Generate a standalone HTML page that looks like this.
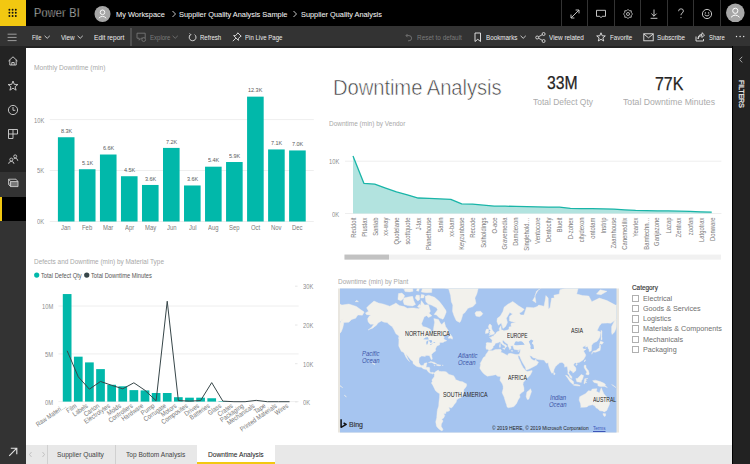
<!DOCTYPE html>
<html><head><meta charset="utf-8"><style>
html,body{margin:0;padding:0;}
body{width:750px;height:464px;overflow:hidden;position:relative;background:#fff;font-family:"Liberation Sans", sans-serif;}
.t{position:absolute;white-space:nowrap;}
svg{overflow:visible}
</style></head><body>
<div style="position:absolute;left:0;top:0;width:750px;height:26px;background:#000"></div>
<div style="position:absolute;left:0;top:0;width:26px;height:26px;background:#F2C811"></div>
<svg style="position:absolute;left:0;top:0" width="26" height="26"><circle cx="9.4" cy="9.7" r="0.95" fill="#111"/><circle cx="9.4" cy="12.8" r="0.95" fill="#111"/><circle cx="9.4" cy="16.0" r="0.95" fill="#111"/><circle cx="12.6" cy="9.7" r="0.95" fill="#111"/><circle cx="12.6" cy="12.8" r="0.95" fill="#111"/><circle cx="12.6" cy="16.0" r="0.95" fill="#111"/><circle cx="15.8" cy="9.7" r="0.95" fill="#111"/><circle cx="15.8" cy="12.8" r="0.95" fill="#111"/><circle cx="15.8" cy="16.0" r="0.95" fill="#111"/></svg>
<div class="t" style="left:34.00px;top:6.33px;font-size:13.227px;line-height:14.774px;color:#ffffff;transform:scaleX(0.820);transform-origin:0 0;-webkit-text-stroke:0.55px #000;letter-spacing:0.3px;">Power BI</div>
<svg style="position:absolute;left:94px;top:6px" width="17" height="17"><circle cx="8.5" cy="8" r="8" fill="#a6a6a6"/><circle cx="8.5" cy="6.3" r="2.3" fill="none" stroke="#fff" stroke-width="0.9"/><path d="M4.8 12.2 Q8.5 8.4 12.2 12.2" fill="none" stroke="#fff" stroke-width="0.9"/></svg>
<div class="t" style="left:115.80px;top:10.66px;font-size:7.558px;line-height:8.442px;color:#f2f2f2;transform:scaleX(0.983);transform-origin:0 0;-webkit-text-stroke:0.05px #f2f2f2;">My Workspace</div>
<svg style="position:absolute;left:170.5px;top:10.3px" width="6" height="8"><path d="M1.5 1 L4.5 4 L1.5 7" fill="none" stroke="#ddd" stroke-width="0.9"/></svg>
<div class="t" style="left:178.60px;top:10.66px;font-size:7.558px;line-height:8.442px;color:#f2f2f2;transform:scaleX(0.979);transform-origin:0 0;-webkit-text-stroke:0.05px #f2f2f2;">Supplier Quality Analysis Sample</div>
<svg style="position:absolute;left:291.5px;top:10.3px" width="6" height="8"><path d="M1.5 1 L4.5 4 L1.5 7" fill="none" stroke="#ddd" stroke-width="0.9"/></svg>
<div class="t" style="left:301.30px;top:10.66px;font-size:7.558px;line-height:8.442px;color:#f2f2f2;transform:scaleX(0.974);transform-origin:0 0;-webkit-text-stroke:0.05px #f2f2f2;">Supplier Quality Analysis</div>
<div style="position:absolute;left:561px;top:0;width:1px;height:26px;background:#333"></div>
<div style="position:absolute;left:587.4px;top:0;width:1px;height:26px;background:#333"></div>
<div style="position:absolute;left:614.2px;top:0;width:1px;height:26px;background:#333"></div>
<div style="position:absolute;left:640.4px;top:0;width:1px;height:26px;background:#333"></div>
<div style="position:absolute;left:666.8px;top:0;width:1px;height:26px;background:#333"></div>
<div style="position:absolute;left:693.1px;top:0;width:1px;height:26px;background:#333"></div>
<div style="position:absolute;left:719.5px;top:0;width:1px;height:26px;background:#333"></div>
<svg style="position:absolute;left:569px;top:8px" width="12" height="12"><path d="M2.2 9.8 L9.8 2.2 M6.6 2 H10 V5.4 M2 6.6 V10 H5.4" fill="none" stroke="#d8d8d8" stroke-width="0.9"/></svg>
<svg style="position:absolute;left:595px;top:8px" width="12" height="12"><path d="M1.5 2.3 H10.5 V8.3 H7.2 L6 9.7 L4.8 8.3 H1.5 Z" fill="none" stroke="#d8d8d8" stroke-width="0.9"/></svg>
<svg style="position:absolute;left:622px;top:8px" width="12" height="12"><circle cx="6" cy="6" r="1.5" fill="none" stroke="#d8d8d8" stroke-width="0.8"/><path d="M6.00 1.40 L7.34 2.77 L9.25 2.75 L9.23 4.66 L10.60 6.00 L9.23 7.34 L9.25 9.25 L7.34 9.23 L6.00 10.60 L4.66 9.23 L2.75 9.25 L2.77 7.34 L1.40 6.00 L2.77 4.66 L2.75 2.75 L4.66 2.77Z" fill="none" stroke="#d8d8d8" stroke-width="0.8" stroke-linejoin="round"/></svg>
<svg style="position:absolute;left:648px;top:8px" width="12" height="12"><path d="M6 1.5 V8.2 M3.4 5.6 L6 8.2 L8.6 5.6 M2.6 10.3 H9.4" fill="none" stroke="#d8d8d8" stroke-width="0.9"/></svg>
<svg style="position:absolute;left:676px;top:7px" width="10" height="13"><path d="M2.6 4.2 Q2.6 1.8 5 1.8 Q7.4 1.8 7.4 4 Q7.4 5.4 5.9 6.2 Q5 6.8 5 8.2" fill="none" stroke="#d8d8d8" stroke-width="0.85"/><circle cx="5" cy="10.6" r="0.55" fill="#d8d8d8"/></svg>
<svg style="position:absolute;left:701px;top:8px" width="12" height="12"><circle cx="6" cy="6" r="4.6" fill="none" stroke="#d8d8d8" stroke-width="0.9"/><circle cx="4.4" cy="4.9" r="0.7" fill="#d8d8d8"/><circle cx="7.6" cy="4.9" r="0.7" fill="#d8d8d8"/><path d="M3.6 6.8 Q6 9.4 8.4 6.8" fill="none" stroke="#d8d8d8" stroke-width="0.9"/></svg>
<svg style="position:absolute;left:725px;top:3px" width="20" height="20"><circle cx="10.3" cy="9.8" r="9.3" fill="#a6a6a6"/><circle cx="10.3" cy="7.8" r="2.6" fill="none" stroke="#fff" stroke-width="1"/><path d="M6 14.3 Q10.3 9.8 14.6 14.3" fill="none" stroke="#fff" stroke-width="1"/></svg>
<div style="position:absolute;left:0;top:26px;width:750px;height:20px;background:#333"></div>
<div style="position:absolute;left:26px;top:45.6px;width:706px;height:2.2px;background:#232323"></div>
<svg style="position:absolute;left:7px;top:33px" width="11" height="9"><path d="M0.6 1.2 H9.6 M0.6 4.4 H9.6 M0.6 7.6 H9.6" stroke="#c0c0c0" stroke-width="0.75"/></svg>
<div class="t" style="left:31.60px;top:33.92px;font-size:7.267px;line-height:8.118px;color:#ececec;transform:scaleX(0.803);transform-origin:0 0;">File</div>
<svg style="position:absolute;left:43.6px;top:35.3px" width="7" height="5"><path d="M0.6 0.8 L3.2 3.3 L5.8 0.8" fill="none" stroke="#ececec" stroke-width="0.8"/></svg>
<div class="t" style="left:60.80px;top:33.92px;font-size:7.267px;line-height:8.118px;color:#ececec;transform:scaleX(0.870);transform-origin:0 0;">View</div>
<svg style="position:absolute;left:77px;top:35.3px" width="7" height="5"><path d="M0.6 0.8 L3.2 3.3 L5.8 0.8" fill="none" stroke="#ececec" stroke-width="0.8"/></svg>
<div class="t" style="left:94.00px;top:33.92px;font-size:7.267px;line-height:8.118px;color:#ececec;transform:scaleX(0.906);transform-origin:0 0;">Edit report</div>
<div style="position:absolute;left:130.2px;top:27.5px;width:1.6px;height:18px;background:#505050"></div>
<svg style="position:absolute;left:135.5px;top:32px" width="11" height="11"><path d="M1 1.2 H9.2 V6.2 H5.2 L3.2 8.2 V6.2 H1 Z" fill="none" stroke="#7a7a7a" stroke-width="0.85"/><circle cx="7.7" cy="7.6" r="1.9" fill="#333" stroke="#7a7a7a" stroke-width="0.8"/></svg>
<div class="t" style="left:149.50px;top:33.92px;font-size:7.267px;line-height:8.118px;color:#7a7a7a;transform:scaleX(0.832);transform-origin:0 0;">Explore</div>
<svg style="position:absolute;left:172.2px;top:35.3px" width="7" height="5"><path d="M0.6 0.8 L3.2 3.3 L5.8 0.8" fill="none" stroke="#7a7a7a" stroke-width="0.8"/></svg>
<svg style="position:absolute;left:188px;top:32.5px" width="9" height="9"><path d="M6.6 1.6 A3.4 3.4 0 1 1 2.6 1.6" fill="none" stroke="#ececec" stroke-width="0.85"/><path d="M1.6 0.4 L2.8 1.6 L1.6 2.8" fill="none" stroke="#ececec" stroke-width="0.8"/></svg>
<div class="t" style="left:199.80px;top:33.92px;font-size:7.267px;line-height:8.118px;color:#ececec;transform:scaleX(0.833);transform-origin:0 0;">Refresh</div>
<svg style="position:absolute;left:231.5px;top:32px" width="10" height="10"><path d="M5.8 0.8 L9.2 4.2 L8 4.8 L6.4 6.6 L6.4 8.4 L1.6 3.6 L3.4 3.6 L5.2 2 Z M3.9 6.1 L0.8 9.2" fill="none" stroke="#ececec" stroke-width="0.85"/></svg>
<div class="t" style="left:245.20px;top:33.92px;font-size:7.267px;line-height:8.118px;color:#ececec;transform:scaleX(0.836);transform-origin:0 0;">Pin Live Page</div>
<svg style="position:absolute;left:405px;top:32.5px" width="8" height="9"><path d="M2.5 1 L1 2.6 L2.5 4.2 M1.2 2.6 H4 A2.6 2.6 0 0 1 4 7.8 H3" fill="none" stroke="#7a7a7a" stroke-width="0.85"/></svg>
<div class="t" style="left:416.80px;top:33.92px;font-size:7.267px;line-height:8.118px;color:#7a7a7a;transform:scaleX(0.884);transform-origin:0 0;">Reset to default</div>
<svg style="position:absolute;left:474px;top:32px" width="8" height="11"><path d="M1 1 H6.5 V9.5 L3.75 7.3 L1 9.5 Z" fill="none" stroke="#ececec" stroke-width="0.9"/></svg>
<div class="t" style="left:485.90px;top:33.92px;font-size:7.267px;line-height:8.118px;color:#ececec;transform:scaleX(0.867);transform-origin:0 0;">Bookmarks</div>
<svg style="position:absolute;left:519.8px;top:35.3px" width="7" height="5"><path d="M0.6 0.8 L3.2 3.3 L5.8 0.8" fill="none" stroke="#ececec" stroke-width="0.8"/></svg>
<svg style="position:absolute;left:535px;top:32px" width="11" height="11"><circle cx="2.2" cy="5.5" r="1.5" fill="none" stroke="#ececec" stroke-width="0.8"/><circle cx="8.6" cy="2" r="1.5" fill="none" stroke="#ececec" stroke-width="0.8"/><circle cx="8.6" cy="9" r="1.5" fill="none" stroke="#ececec" stroke-width="0.8"/><path d="M3.5 4.8 L7.3 2.7 M3.5 6.2 L7.3 8.3" stroke="#ececec" stroke-width="0.8"/></svg>
<div class="t" style="left:549.30px;top:33.92px;font-size:7.267px;line-height:8.118px;color:#ececec;transform:scaleX(0.878);transform-origin:0 0;">View related</div>
<svg style="position:absolute;left:596px;top:32px" width="10" height="10"><path d="M5 0.8 L6.2 3.8 L9.3 3.9 L6.9 5.9 L7.7 9 L5 7.3 L2.3 9 L3.1 5.9 L0.7 3.9 L3.8 3.8 Z" fill="none" stroke="#ececec" stroke-width="0.85"/></svg>
<div class="t" style="left:610.00px;top:33.92px;font-size:7.267px;line-height:8.118px;color:#ececec;transform:scaleX(0.846);transform-origin:0 0;">Favorite</div>
<svg style="position:absolute;left:642.5px;top:33px" width="11" height="9"><rect x="0.8" y="0.8" width="9.4" height="7" fill="none" stroke="#ececec" stroke-width="0.85"/><path d="M0.8 1 L5.5 4.8 L10.2 1" fill="none" stroke="#ececec" stroke-width="0.85"/></svg>
<div class="t" style="left:656.70px;top:33.92px;font-size:7.267px;line-height:8.118px;color:#ececec;transform:scaleX(0.867);transform-origin:0 0;">Subscribe</div>
<svg style="position:absolute;left:695px;top:32px" width="10" height="10"><path d="M1 4.5 V9 H8.5 V7" fill="none" stroke="#ececec" stroke-width="0.85"/><path d="M3 7 Q3.5 3.5 7 3.5 V5.5 L9.5 3 L7 0.7 V2.5 Q3 2.5 3 7" fill="none" stroke="#ececec" stroke-width="0.85"/></svg>
<div class="t" style="left:708.50px;top:33.92px;font-size:7.267px;line-height:8.118px;color:#ececec;transform:scaleX(0.814);transform-origin:0 0;">Share</div>
<svg style="position:absolute;left:735px;top:35.3px" width="12" height="3"><circle cx="1.5" cy="1.5" r="0.7" fill="#ececec"/><circle cx="5.1" cy="1.5" r="0.7" fill="#ececec"/><circle cx="8.7" cy="1.5" r="0.7" fill="#ececec"/></svg>
<div style="position:absolute;left:0;top:46px;width:26px;height:418px;background:#333"></div>
<div style="position:absolute;left:0;top:46px;width:26px;height:126px;background:#232323"></div>
<div style="position:absolute;left:0;top:197px;width:26px;height:24px;background:#000"></div>
<div style="position:absolute;left:0;top:197px;width:1.5px;height:24px;background:#F2C811"></div>
<svg style="position:absolute;left:7px;top:55px" width="12" height="12"><path d="M1.5 6 L6 1.8 L10.5 6 M2.8 4.9 V10 H9.2 V4.9 M4.8 10 V7.5 H7.2 V10" fill="none" stroke="#d4d4d4" stroke-width="0.9"/></svg>
<svg style="position:absolute;left:7px;top:80px" width="12" height="12"><path d="M6 1 L7.3 4.4 L10.9 4.5 L8.1 6.7 L9.1 10.2 L6 8.2 L2.9 10.2 L3.9 6.7 L1.1 4.5 L4.7 4.4 Z" fill="none" stroke="#d4d4d4" stroke-width="0.9"/></svg>
<svg style="position:absolute;left:7px;top:104px" width="12" height="12"><circle cx="6" cy="6" r="4.6" fill="none" stroke="#d4d4d4" stroke-width="0.9"/><path d="M6 3 V6.3 H8.3" fill="none" stroke="#d4d4d4" stroke-width="0.9"/></svg>
<svg style="position:absolute;left:7px;top:128px" width="12" height="12"><path d="M1.5 1.5 H10.5 V6 H6 V10.5 H1.5 Z M6 1.5 V6 M1.5 6 H6" fill="none" stroke="#d4d4d4" stroke-width="0.9"/></svg>
<svg style="position:absolute;left:7px;top:153px" width="12" height="12"><circle cx="4.3" cy="6.6" r="1.5" fill="none" stroke="#d4d4d4" stroke-width="0.85"/><path d="M1.6 10.8 Q1.8 8.4 4.3 8.4 Q6.8 8.4 7 10.8" fill="none" stroke="#d4d4d4" stroke-width="0.85"/><circle cx="8.2" cy="3.4" r="1.5" fill="none" stroke="#d4d4d4" stroke-width="0.85"/><path d="M6.6 6.2 Q7 5.2 8.2 5.2 Q10.6 5.2 10.8 7.8" fill="none" stroke="#d4d4d4" stroke-width="0.85"/></svg>
<svg style="position:absolute;left:7px;top:177px" width="13" height="12"><path d="M3.6 4.6 H11 V9.6 H3.6 L1.6 7.6 Z" fill="#777"/><path d="M1.6 2.2 H9 L11 4.6 V9.6 H3.6 L1.6 7.6 Z M1.6 2.2 L3.6 4.6 H11 M3.6 4.6 V9.6" fill="none" stroke="#d4d4d4" stroke-width="0.85" stroke-linejoin="round"/></svg>
<svg style="position:absolute;left:8px;top:447px" width="12" height="12"><path d="M1.2 8.8 L8.8 1.2 M2.8 1.2 H8.8 V7.2" fill="none" stroke="#e0e0e0" stroke-width="1.15"/></svg>
<div style="position:absolute;left:732px;top:46px;width:18px;height:418px;background:#222"></div>
<div style="position:absolute;left:732px;top:46px;width:1.2px;height:418px;background:#000"></div>
<svg style="position:absolute;left:737px;top:55px" width="8" height="9"><path d="M5.2 1.8 L2.6 4.6 L5.2 7.4" fill="none" stroke="#ccc" stroke-width="0.8"/></svg>
<div class="t" style="left:737px;top:80.2px;font-size:7.2px;line-height:8px;color:#e8e8e8;-webkit-text-stroke:0.25px #e8e8e8;writing-mode:vertical-rl;letter-spacing:-0.2px">FILTERS</div>
<div style="position:absolute;left:26px;top:445px;width:706px;height:19px;background:#e8e8e8"></div>
<svg style="position:absolute;left:28px;top:451px" width="18" height="8"><path d="M3.5 1 L1.5 3.5 L3.5 6 M14.5 1 L16.5 3.5 L14.5 6" fill="none" stroke="#b8b8b8" stroke-width="0.8"/></svg>
<div style="position:absolute;left:47px;top:445px;width:1px;height:19px;background:#d0d0d0"></div>
<div style="position:absolute;left:114.5px;top:445px;width:1px;height:19px;background:#d0d0d0"></div>
<div class="t" style="left:56.80px;top:451.19px;font-size:6.977px;line-height:7.793px;color:#444;transform:scaleX(0.954);transform-origin:0 0;">Supplier Quality</div>
<div class="t" style="left:126.30px;top:451.19px;font-size:6.977px;line-height:7.793px;color:#444;transform:scaleX(0.944);transform-origin:0 0;">Top Bottom Analysis</div>
<div style="position:absolute;left:197px;top:445px;width:77.5px;height:19px;background:#fff"></div>
<div style="position:absolute;left:197px;top:462px;width:77.5px;height:2px;background:#F2C811"></div>
<div class="t" style="left:208.40px;top:451.19px;font-size:6.977px;line-height:7.793px;color:#252525;transform:scaleX(0.952);transform-origin:0 0;-webkit-text-stroke:0.05px #252525;">Downtime Analysis</div>
<div class="t" style="left:34.10px;top:63.83px;font-size:7.703px;line-height:8.605px;color:#a8a8a8;transform:scaleX(0.862);transform-origin:0 0;">Monthly Downtime (min)</div>
<svg style="position:absolute;left:0;top:0" width="750" height="464"><line x1="49.8" y1="119.6" x2="313.8" y2="119.6" stroke="#eaeaea" stroke-width="0.8"/><line x1="49.8" y1="170.5" x2="313.8" y2="170.5" stroke="#eaeaea" stroke-width="0.8"/><line x1="49.8" y1="221.5" x2="313.8" y2="221.5" stroke="#eaeaea" stroke-width="0.8"/><rect x="57.90" y="137.25" width="16.6" height="84.25" fill="#01B8AA"/><rect x="78.92" y="169.23" width="16.6" height="52.27" fill="#01B8AA"/><rect x="99.94" y="154.51" width="16.6" height="66.99" fill="#01B8AA"/><rect x="120.96" y="176.23" width="16.6" height="45.27" fill="#01B8AA"/><rect x="141.98" y="184.96" width="16.6" height="36.54" fill="#01B8AA"/><rect x="163.00" y="147.91" width="16.6" height="73.59" fill="#01B8AA"/><rect x="184.02" y="185.47" width="16.6" height="36.03" fill="#01B8AA"/><rect x="205.04" y="166.69" width="16.6" height="54.81" fill="#01B8AA"/><rect x="226.06" y="162.02" width="16.6" height="59.48" fill="#01B8AA"/><rect x="247.08" y="96.65" width="16.6" height="124.85" fill="#01B8AA"/><rect x="268.10" y="149.44" width="16.6" height="72.06" fill="#01B8AA"/><rect x="289.12" y="150.45" width="16.6" height="71.05" fill="#01B8AA"/></svg>
<div class="t" style="left:34.15px;top:116.58px;font-size:6.541px;line-height:7.306px;color:#8c8c8c;transform:scaleX(0.880);transform-origin:0 0;">10K</div>
<div class="t" style="left:37.35px;top:167.48px;font-size:6.541px;line-height:7.306px;color:#8c8c8c;transform:scaleX(0.880);transform-origin:0 0;">5K</div>
<div class="t" style="left:37.35px;top:218.48px;font-size:6.541px;line-height:7.306px;color:#8c8c8c;transform:scaleX(0.880);transform-origin:0 0;">0K</div>
<div class="t" style="left:60.55px;top:128.03px;font-size:6.105px;line-height:6.819px;color:#5a5a5a;transform:scaleX(0.900);transform-origin:0 0;">8.3K</div>
<div class="t" style="left:61.43px;top:223.89px;font-size:6.977px;line-height:7.793px;color:#7a7a7a;transform:scaleX(0.850);transform-origin:0 0;">Jan</div>
<div class="t" style="left:81.57px;top:160.00px;font-size:6.105px;line-height:6.819px;color:#5a5a5a;transform:scaleX(0.900);transform-origin:0 0;">5.1K</div>
<div class="t" style="left:82.11px;top:223.89px;font-size:6.977px;line-height:7.793px;color:#7a7a7a;transform:scaleX(0.850);transform-origin:0 0;">Feb</div>
<div class="t" style="left:102.59px;top:145.29px;font-size:6.105px;line-height:6.819px;color:#5a5a5a;transform:scaleX(0.900);transform-origin:0 0;">6.6K</div>
<div class="t" style="left:103.14px;top:223.89px;font-size:6.977px;line-height:7.793px;color:#7a7a7a;transform:scaleX(0.850);transform-origin:0 0;">Mar</div>
<div class="t" style="left:123.61px;top:167.01px;font-size:6.105px;line-height:6.819px;color:#5a5a5a;transform:scaleX(0.900);transform-origin:0 0;">4.5K</div>
<div class="t" style="left:124.65px;top:223.89px;font-size:6.977px;line-height:7.793px;color:#7a7a7a;transform:scaleX(0.850);transform-origin:0 0;">Apr</div>
<div class="t" style="left:144.63px;top:175.74px;font-size:6.105px;line-height:6.819px;color:#5a5a5a;transform:scaleX(0.900);transform-origin:0 0;">3.6K</div>
<div class="t" style="left:144.68px;top:223.89px;font-size:6.977px;line-height:7.793px;color:#7a7a7a;transform:scaleX(0.850);transform-origin:0 0;">May</div>
<div class="t" style="left:165.65px;top:138.69px;font-size:6.105px;line-height:6.819px;color:#5a5a5a;transform:scaleX(0.900);transform-origin:0 0;">7.2K</div>
<div class="t" style="left:166.53px;top:223.89px;font-size:6.977px;line-height:7.793px;color:#7a7a7a;transform:scaleX(0.850);transform-origin:0 0;">Jun</div>
<div class="t" style="left:186.67px;top:176.24px;font-size:6.105px;line-height:6.819px;color:#5a5a5a;transform:scaleX(0.900);transform-origin:0 0;">3.6K</div>
<div class="t" style="left:188.52px;top:223.89px;font-size:6.977px;line-height:7.793px;color:#7a7a7a;transform:scaleX(0.850);transform-origin:0 0;">Jul</div>
<div class="t" style="left:207.69px;top:157.47px;font-size:6.105px;line-height:6.819px;color:#5a5a5a;transform:scaleX(0.900);transform-origin:0 0;">5.4K</div>
<div class="t" style="left:208.06px;top:223.89px;font-size:6.977px;line-height:7.793px;color:#7a7a7a;transform:scaleX(0.850);transform-origin:0 0;">Aug</div>
<div class="t" style="left:228.71px;top:152.80px;font-size:6.105px;line-height:6.819px;color:#5a5a5a;transform:scaleX(0.900);transform-origin:0 0;">5.9K</div>
<div class="t" style="left:229.08px;top:223.89px;font-size:6.977px;line-height:7.793px;color:#7a7a7a;transform:scaleX(0.850);transform-origin:0 0;">Sep</div>
<div class="t" style="left:248.20px;top:87.43px;font-size:6.105px;line-height:6.819px;color:#5a5a5a;transform:scaleX(0.900);transform-origin:0 0;">12.3K</div>
<div class="t" style="left:250.77px;top:223.89px;font-size:6.977px;line-height:7.793px;color:#7a7a7a;transform:scaleX(0.850);transform-origin:0 0;">Oct</div>
<div class="t" style="left:270.75px;top:140.21px;font-size:6.105px;line-height:6.819px;color:#5a5a5a;transform:scaleX(0.900);transform-origin:0 0;">7.1K</div>
<div class="t" style="left:271.12px;top:223.89px;font-size:6.977px;line-height:7.793px;color:#7a7a7a;transform:scaleX(0.850);transform-origin:0 0;">Nov</div>
<div class="t" style="left:291.77px;top:141.23px;font-size:6.105px;line-height:6.819px;color:#5a5a5a;transform:scaleX(0.900);transform-origin:0 0;">7.0K</div>
<div class="t" style="left:292.14px;top:223.89px;font-size:6.977px;line-height:7.793px;color:#7a7a7a;transform:scaleX(0.850);transform-origin:0 0;">Dec</div>
<div class="t" style="left:332.90px;top:75.67px;font-size:22.027px;line-height:24.604px;color:#3c3c3c;transform:scaleX(0.920);transform-origin:0 0;-webkit-text-stroke:0.6px #fff;letter-spacing:-0.1px;">Downtime Analysis</div>
<div class="t" style="left:547.30px;top:72.66px;font-size:18.605px;line-height:20.781px;color:#252423;transform:scaleX(0.846);transform-origin:0 0;-webkit-text-stroke:0.25px #252423;">33M</div>
<div class="t" style="left:532.50px;top:97.80px;font-size:8.285px;line-height:9.254px;color:#ababab;transform:scaleX(1.020);transform-origin:0 0;">Total Defect Qty</div>
<div class="t" style="left:654.90px;top:74.09px;font-size:18.023px;line-height:20.132px;color:#252423;transform:scaleX(0.885);transform-origin:0 0;-webkit-text-stroke:0.25px #252423;">77K</div>
<div class="t" style="left:622.90px;top:97.91px;font-size:8.721px;line-height:9.741px;color:#ababab;transform:scaleX(0.994);transform-origin:0 0;">Total Downtime Minutes</div>
<div class="t" style="left:329.00px;top:120.19px;font-size:6.977px;line-height:7.793px;color:#a8a8a8;transform:scaleX(0.930);transform-origin:0 0;">Downtime (min) by Vendor</div>
<svg style="position:absolute;left:0;top:0" width="750" height="464"><line x1="345" y1="161.2" x2="721.4" y2="161.2" stroke="#eaeaea" stroke-width="0.8"/><line x1="345" y1="213.5" x2="721.4" y2="213.5" stroke="#eaeaea" stroke-width="0.8"/><polygon points="353.00,213.5 353.00,155.97 363.87,183.32 374.74,184.11 385.61,188.08 396.48,191.90 407.35,194.78 418.22,198.02 429.09,198.33 439.96,198.86 450.83,199.38 461.70,203.88 472.57,204.09 483.44,205.13 494.31,206.18 505.18,206.18 516.05,206.44 526.92,206.70 537.79,206.96 548.66,207.12 559.53,207.22 570.40,208.43 581.27,208.64 592.14,208.69 603.01,208.79 613.88,209.05 624.75,209.84 635.62,210.47 646.49,210.62 657.36,210.78 668.23,210.88 679.10,211.15 689.97,211.41 700.84,211.83 711.71,212.19 711.71,213.5" fill="#b2e3df"/><polyline points="353.00,155.97 363.87,183.32 374.74,184.11 385.61,188.08 396.48,191.90 407.35,194.78 418.22,198.02 429.09,198.33 439.96,198.86 450.83,199.38 461.70,203.88 472.57,204.09 483.44,205.13 494.31,206.18 505.18,206.18 516.05,206.44 526.92,206.70 537.79,206.96 548.66,207.12 559.53,207.22 570.40,208.43 581.27,208.64 592.14,208.69 603.01,208.79 613.88,209.05 624.75,209.84 635.62,210.47 646.49,210.62 657.36,210.78 668.23,210.88 679.10,211.15 689.97,211.41 700.84,211.83 711.71,212.19" fill="none" stroke="#19b5a8" stroke-width="1.3" stroke-linejoin="round"/><rect x="344.5" y="254.6" width="376.5" height="5" fill="#f1f1f1"/><rect x="344.5" y="254.6" width="44.5" height="5" fill="#c2c2c2"/></svg>
<div class="t" style="left:328.95px;top:157.78px;font-size:6.541px;line-height:7.306px;color:#8c8c8c;transform:scaleX(0.880);transform-origin:0 0;">10K</div>
<div class="t" style="left:332.15px;top:211.08px;font-size:6.541px;line-height:7.306px;color:#8c8c8c;transform:scaleX(0.880);transform-origin:0 0;">0K</div>
<div class="t" style="right:397.00px;top:213.70px;font-size:6.8px;line-height:7.2px;color:#7a7a7a;transform:rotate(-90deg) scaleX(0.86);transform-origin:100% 50%">Reddoit</div>
<div class="t" style="right:386.13px;top:213.70px;font-size:6.8px;line-height:7.2px;color:#7a7a7a;transform:rotate(-90deg) scaleX(0.86);transform-origin:100% 50%">Plustax</div>
<div class="t" style="right:375.26px;top:213.70px;font-size:6.8px;line-height:7.2px;color:#7a7a7a;transform:rotate(-90deg) scaleX(0.86);transform-origin:100% 50%">Sanlab</div>
<div class="t" style="right:364.39px;top:213.70px;font-size:6.8px;line-height:7.2px;color:#7a7a7a;transform:rotate(-90deg) scaleX(0.86);transform-origin:100% 50%">xx-way</div>
<div class="t" style="right:353.52px;top:213.70px;font-size:6.8px;line-height:7.2px;color:#7a7a7a;transform:rotate(-90deg) scaleX(0.86);transform-origin:100% 50%">Quotelane</div>
<div class="t" style="right:342.65px;top:213.70px;font-size:6.8px;line-height:7.2px;color:#7a7a7a;transform:rotate(-90deg) scaleX(0.86);transform-origin:100% 50%">scottquote</div>
<div class="t" style="right:331.78px;top:213.70px;font-size:6.8px;line-height:7.2px;color:#7a7a7a;transform:rotate(-90deg) scaleX(0.86);transform-origin:100% 50%">J-tax</div>
<div class="t" style="right:320.91px;top:213.70px;font-size:6.8px;line-height:7.2px;color:#7a7a7a;transform:rotate(-90deg) scaleX(0.86);transform-origin:100% 50%">Planethouse</div>
<div class="t" style="right:310.04px;top:213.70px;font-size:6.8px;line-height:7.2px;color:#7a7a7a;transform:rotate(-90deg) scaleX(0.86);transform-origin:100% 50%">Sanin</div>
<div class="t" style="right:299.17px;top:213.70px;font-size:6.8px;line-height:7.2px;color:#7a7a7a;transform:rotate(-90deg) scaleX(0.86);transform-origin:100% 50%">xx-bam</div>
<div class="t" style="right:288.30px;top:213.70px;font-size:6.8px;line-height:7.2px;color:#7a7a7a;transform:rotate(-90deg) scaleX(0.86);transform-origin:100% 50%">Keyzunbase</div>
<div class="t" style="right:277.43px;top:213.70px;font-size:6.8px;line-height:7.2px;color:#7a7a7a;transform:rotate(-90deg) scaleX(0.86);transform-origin:100% 50%">Recode</div>
<div class="t" style="right:266.56px;top:213.70px;font-size:6.8px;line-height:7.2px;color:#7a7a7a;transform:rotate(-90deg) scaleX(0.86);transform-origin:100% 50%">Solholdings</div>
<div class="t" style="right:255.69px;top:213.70px;font-size:6.8px;line-height:7.2px;color:#7a7a7a;transform:rotate(-90deg) scaleX(0.86);transform-origin:100% 50%">O-ace</div>
<div class="t" style="right:244.82px;top:213.70px;font-size:6.8px;line-height:7.2px;color:#7a7a7a;transform:rotate(-90deg) scaleX(0.86);transform-origin:100% 50%">Gravemedia</div>
<div class="t" style="right:233.95px;top:213.70px;font-size:6.8px;line-height:7.2px;color:#7a7a7a;transform:rotate(-90deg) scaleX(0.86);transform-origin:100% 50%">Damdexon</div>
<div class="t" style="right:223.08px;top:213.70px;font-size:6.8px;line-height:7.2px;color:#7a7a7a;transform:rotate(-90deg) scaleX(0.86);transform-origin:100% 50%">Singlehold…</div>
<div class="t" style="right:212.21px;top:213.70px;font-size:6.8px;line-height:7.2px;color:#7a7a7a;transform:rotate(-90deg) scaleX(0.86);transform-origin:100% 50%">Ventocore</div>
<div class="t" style="right:201.34px;top:213.70px;font-size:6.8px;line-height:7.2px;color:#7a7a7a;transform:rotate(-90deg) scaleX(0.86);transform-origin:100% 50%">Dentocity</div>
<div class="t" style="right:190.47px;top:213.70px;font-size:6.8px;line-height:7.2px;color:#7a7a7a;transform:rotate(-90deg) scaleX(0.86);transform-origin:100% 50%">Blueit</div>
<div class="t" style="right:179.60px;top:213.70px;font-size:6.8px;line-height:7.2px;color:#7a7a7a;transform:rotate(-90deg) scaleX(0.86);transform-origin:100% 50%">D-zohex</div>
<div class="t" style="right:168.73px;top:213.70px;font-size:6.8px;line-height:7.2px;color:#7a7a7a;transform:rotate(-90deg) scaleX(0.86);transform-origin:100% 50%">citydexon</div>
<div class="t" style="right:157.86px;top:213.70px;font-size:6.8px;line-height:7.2px;color:#7a7a7a;transform:rotate(-90deg) scaleX(0.86);transform-origin:100% 50%">ontotam</div>
<div class="t" style="right:146.99px;top:213.70px;font-size:6.8px;line-height:7.2px;color:#7a7a7a;transform:rotate(-90deg) scaleX(0.86);transform-origin:100% 50%">Instrip</div>
<div class="t" style="right:136.12px;top:213.70px;font-size:6.8px;line-height:7.2px;color:#7a7a7a;transform:rotate(-90deg) scaleX(0.86);transform-origin:100% 50%">Zaamhouse</div>
<div class="t" style="right:125.25px;top:213.70px;font-size:6.8px;line-height:7.2px;color:#7a7a7a;transform:rotate(-90deg) scaleX(0.86);transform-origin:100% 50%">Canemedilix</div>
<div class="t" style="right:114.38px;top:213.70px;font-size:6.8px;line-height:7.2px;color:#7a7a7a;transform:rotate(-90deg) scaleX(0.86);transform-origin:100% 50%">Yearlex</div>
<div class="t" style="right:103.51px;top:213.70px;font-size:6.8px;line-height:7.2px;color:#7a7a7a;transform:rotate(-90deg) scaleX(0.86);transform-origin:100% 50%">Bamtechn…</div>
<div class="t" style="right:92.64px;top:213.70px;font-size:6.8px;line-height:7.2px;color:#7a7a7a;transform:rotate(-90deg) scaleX(0.86);transform-origin:100% 50%">Ganjazone</div>
<div class="t" style="right:81.77px;top:213.70px;font-size:6.8px;line-height:7.2px;color:#7a7a7a;transform:rotate(-90deg) scaleX(0.86);transform-origin:100% 50%">Lazap</div>
<div class="t" style="right:70.90px;top:213.70px;font-size:6.8px;line-height:7.2px;color:#7a7a7a;transform:rotate(-90deg) scaleX(0.86);transform-origin:100% 50%">Zentrax</div>
<div class="t" style="right:60.03px;top:213.70px;font-size:6.8px;line-height:7.2px;color:#7a7a7a;transform:rotate(-90deg) scaleX(0.86);transform-origin:100% 50%">zoofan</div>
<div class="t" style="right:49.16px;top:213.70px;font-size:6.8px;line-height:7.2px;color:#7a7a7a;transform:rotate(-90deg) scaleX(0.86);transform-origin:100% 50%">Latgotrax</div>
<div class="t" style="right:38.29px;top:213.70px;font-size:6.8px;line-height:7.2px;color:#7a7a7a;transform:rotate(-90deg) scaleX(0.86);transform-origin:100% 50%">Donware</div>
<div class="t" style="left:34.10px;top:257.82px;font-size:7.267px;line-height:8.118px;color:#a8a8a8;transform:scaleX(0.887);transform-origin:0 0;">Defects and Downtime (min) by Material Type</div>
<svg style="position:absolute;left:0;top:0" width="750" height="464"><circle cx="36.7" cy="275.1" r="2.6" fill="#01B8AA"/><circle cx="86.75" cy="275.1" r="2.65" fill="#374649"/><line x1="58.4" y1="306" x2="298.6" y2="306" stroke="#eaeaea" stroke-width="0.8"/><line x1="58.4" y1="353.9" x2="298.6" y2="353.9" stroke="#eaeaea" stroke-width="0.8"/><line x1="58.4" y1="401.6" x2="298.6" y2="401.6" stroke="#eaeaea" stroke-width="0.8"/><line x1="295" y1="286.2" x2="297.5" y2="286.2" stroke="#e0e0e0" stroke-width="0.8"/><line x1="295" y1="325" x2="297.5" y2="325" stroke="#e0e0e0" stroke-width="0.8"/><line x1="295" y1="363.7" x2="297.5" y2="363.7" stroke="#e0e0e0" stroke-width="0.8"/><line x1="295" y1="401.9" x2="297.5" y2="401.9" stroke="#e0e0e0" stroke-width="0.8"/><rect x="62.80" y="294.05" width="8.7" height="107.55" fill="#01B8AA"/><rect x="73.92" y="356.67" width="8.7" height="44.93" fill="#01B8AA"/><rect x="85.04" y="362.40" width="8.7" height="39.20" fill="#01B8AA"/><rect x="96.16" y="369.10" width="8.7" height="32.50" fill="#01B8AA"/><rect x="107.28" y="384.77" width="8.7" height="16.83" fill="#01B8AA"/><rect x="118.40" y="386.30" width="8.7" height="15.30" fill="#01B8AA"/><rect x="129.52" y="390.13" width="8.7" height="11.47" fill="#01B8AA"/><rect x="140.64" y="390.41" width="8.7" height="11.19" fill="#01B8AA"/><rect x="151.76" y="393.00" width="8.7" height="8.60" fill="#01B8AA"/><rect x="162.88" y="393.00" width="8.7" height="8.60" fill="#01B8AA"/><rect x="174.00" y="397.20" width="8.7" height="4.40" fill="#01B8AA"/><rect x="185.12" y="397.68" width="8.7" height="3.92" fill="#01B8AA"/><rect x="196.24" y="397.68" width="8.7" height="3.92" fill="#01B8AA"/><rect x="207.36" y="398.25" width="8.7" height="3.35" fill="#01B8AA"/><rect x="218.48" y="401.12" width="8.7" height="0.48" fill="#01B8AA"/><polyline points="67.15,350.79 78.27,376.83 89.39,389.17 100.51,381.46 111.63,385.31 122.75,388.79 133.87,382.81 144.99,390.33 156.11,400.74 167.23,301.23 178.35,400.55 189.47,401.13 200.59,400.55 211.71,382.61 222.83,401.13 233.95,401.71 245.07,401.71 256.19,400.36 267.31,401.71 278.43,401.71 289.55,401.71" fill="none" stroke="#374649" stroke-width="1.0"/></svg>
<div class="t" style="left:40.60px;top:271.82px;font-size:7.267px;line-height:8.118px;color:#555;transform:scaleX(0.787);transform-origin:0 0;">Total Defect Qty</div>
<div class="t" style="left:90.70px;top:271.82px;font-size:7.267px;line-height:8.118px;color:#555;transform:scaleX(0.791);transform-origin:0 0;">Total Downtime Minutes</div>
<div class="t" style="left:41.80px;top:302.98px;font-size:6.541px;line-height:7.306px;color:#8c8c8c;transform:scaleX(0.880);transform-origin:0 0;">10M</div>
<div class="t" style="left:45.00px;top:350.88px;font-size:6.541px;line-height:7.306px;color:#8c8c8c;transform:scaleX(0.880);transform-origin:0 0;">5M</div>
<div class="t" style="left:45.00px;top:398.58px;font-size:6.541px;line-height:7.306px;color:#8c8c8c;transform:scaleX(0.880);transform-origin:0 0;">0M</div>
<div class="t" style="left:303.20px;top:283.18px;font-size:6.541px;line-height:7.306px;color:#8c8c8c;transform:scaleX(0.880);transform-origin:0 0;">30K</div>
<div class="t" style="left:303.20px;top:321.98px;font-size:6.541px;line-height:7.306px;color:#8c8c8c;transform:scaleX(0.880);transform-origin:0 0;">20K</div>
<div class="t" style="left:303.20px;top:360.68px;font-size:6.541px;line-height:7.306px;color:#8c8c8c;transform:scaleX(0.880);transform-origin:0 0;">10K</div>
<div class="t" style="left:303.20px;top:398.88px;font-size:6.541px;line-height:7.306px;color:#8c8c8c;transform:scaleX(0.880);transform-origin:0 0;">0K</div>
<div class="t" style="right:687.25px;top:402px;font-size:6.8px;line-height:7.2px;color:#7a7a7a;transform:rotate(-35deg) scaleX(0.85);transform-origin:100% 0%">Raw Materi…</div>
<div class="t" style="right:676.13px;top:402px;font-size:6.8px;line-height:7.2px;color:#7a7a7a;transform:rotate(-35deg) scaleX(0.85);transform-origin:100% 0%">Film</div>
<div class="t" style="right:665.01px;top:402px;font-size:6.8px;line-height:7.2px;color:#7a7a7a;transform:rotate(-35deg) scaleX(0.85);transform-origin:100% 0%">Labels</div>
<div class="t" style="right:653.89px;top:402px;font-size:6.8px;line-height:7.2px;color:#7a7a7a;transform:rotate(-35deg) scaleX(0.85);transform-origin:100% 0%">Carton</div>
<div class="t" style="right:642.77px;top:402px;font-size:6.8px;line-height:7.2px;color:#7a7a7a;transform:rotate(-35deg) scaleX(0.85);transform-origin:100% 0%">Electrolytes</div>
<div class="t" style="right:631.65px;top:402px;font-size:6.8px;line-height:7.2px;color:#7a7a7a;transform:rotate(-35deg) scaleX(0.85);transform-origin:100% 0%">Molds</div>
<div class="t" style="right:620.53px;top:402px;font-size:6.8px;line-height:7.2px;color:#7a7a7a;transform:rotate(-35deg) scaleX(0.85);transform-origin:100% 0%">Controllers</div>
<div class="t" style="right:609.41px;top:402px;font-size:6.8px;line-height:7.2px;color:#7a7a7a;transform:rotate(-35deg) scaleX(0.85);transform-origin:100% 0%">Hardware</div>
<div class="t" style="right:598.29px;top:402px;font-size:6.8px;line-height:7.2px;color:#7a7a7a;transform:rotate(-35deg) scaleX(0.85);transform-origin:100% 0%">Pump</div>
<div class="t" style="right:587.17px;top:402px;font-size:6.8px;line-height:7.2px;color:#7a7a7a;transform:rotate(-35deg) scaleX(0.85);transform-origin:100% 0%">Corrugate</div>
<div class="t" style="right:576.05px;top:402px;font-size:6.8px;line-height:7.2px;color:#7a7a7a;transform:rotate(-35deg) scaleX(0.85);transform-origin:100% 0%">Motors</div>
<div class="t" style="right:564.93px;top:402px;font-size:6.8px;line-height:7.2px;color:#7a7a7a;transform:rotate(-35deg) scaleX(0.85);transform-origin:100% 0%">Composites</div>
<div class="t" style="right:553.81px;top:402px;font-size:6.8px;line-height:7.2px;color:#7a7a7a;transform:rotate(-35deg) scaleX(0.85);transform-origin:100% 0%">Drives</div>
<div class="t" style="right:542.69px;top:402px;font-size:6.8px;line-height:7.2px;color:#7a7a7a;transform:rotate(-35deg) scaleX(0.85);transform-origin:100% 0%">Batteries</div>
<div class="t" style="right:531.57px;top:402px;font-size:6.8px;line-height:7.2px;color:#7a7a7a;transform:rotate(-35deg) scaleX(0.85);transform-origin:100% 0%">Glass</div>
<div class="t" style="right:520.45px;top:402px;font-size:6.8px;line-height:7.2px;color:#7a7a7a;transform:rotate(-35deg) scaleX(0.85);transform-origin:100% 0%">Crates</div>
<div class="t" style="right:509.33px;top:402px;font-size:6.8px;line-height:7.2px;color:#7a7a7a;transform:rotate(-35deg) scaleX(0.85);transform-origin:100% 0%">Packaging</div>
<div class="t" style="right:498.21px;top:402px;font-size:6.8px;line-height:7.2px;color:#7a7a7a;transform:rotate(-35deg) scaleX(0.85);transform-origin:100% 0%">Mechanicals</div>
<div class="t" style="right:487.09px;top:402px;font-size:6.8px;line-height:7.2px;color:#7a7a7a;transform:rotate(-35deg) scaleX(0.85);transform-origin:100% 0%">Tape</div>
<div class="t" style="right:475.97px;top:402px;font-size:6.8px;line-height:7.2px;color:#7a7a7a;transform:rotate(-35deg) scaleX(0.85);transform-origin:100% 0%">Printed Materials</div>
<div class="t" style="right:464.85px;top:402px;font-size:6.8px;line-height:7.2px;color:#7a7a7a;transform:rotate(-35deg) scaleX(0.85);transform-origin:100% 0%">Wires</div>
<div class="t" style="left:337.60px;top:278.46px;font-size:7.558px;line-height:8.442px;color:#a8a8a8;transform:scaleX(0.855);transform-origin:0 0;">Downtime (min) by Plant</div>
<svg style="position:absolute;left:0;top:0" width="750" height="464"><defs><clipPath id="mc"><rect x="340" y="288.5" width="276.5" height="144.0"/></clipPath></defs><rect x="338" y="288.5" width="281" height="144.0" fill="#e9e6df"/><rect x="340" y="288.5" width="276.5" height="144.0" fill="#a6c5f0"/><g clip-path="url(#mc)"><path d="M212.8 349.3 L212.4 347.5 L212.9 344.3 L212.6 343.3 L213.6 342.6 L218.3 342.9 L218.7 340.1 L216.1 337.4 L218.5 337.1 L218.2 335.9 L219.8 336.2 L221.0 334.4 L222.3 333.8 L223.2 332.0 L224.9 331.3 L226.2 330.8 L225.8 328.6 L227.7 325.6 L227.6 327.7 L227.9 330.1 L229.1 330.1 L230.4 330.8 L233.8 330.1 L235.6 328.9 L235.6 326.9 L237.9 326.6 L237.5 324.5 L237.9 323.3 L242.4 322.4 L238.6 321.8 L236.0 320.7 L236.0 316.6 L239.0 314.0 L236.3 312.5 L232.9 318.3 L233.9 322.2 L233.7 323.3 L232.2 326.6 L230.6 327.8 L229.4 328.5 L228.7 325.6 L227.6 323.1 L224.9 325.2 L223.4 321.5 L223.8 318.3 L226.8 316.1 L229.5 311.2 L230.6 307.2 L234.1 304.5 L239.2 301.5 L242.8 304.0 L244.7 305.6 L250.8 309.3 L248.5 311.8 L245.8 313.1 L247.4 314.9 L250.4 314.9 L253.1 307.2 L260.3 307.7 L263.7 306.6 L265.2 305.1 L270.5 306.2 L271.7 300.6 L272.4 295.5 L274.7 298.1 L275.1 309.3 L276.6 307.2 L278.1 298.1 L280.8 298.1 L280.4 295.2 L285.7 294.1 L286.5 289.8 L294.1 287.6 L298.6 282.6 L304.7 288.3 L303.2 294.1 L309.3 295.5 L315.3 296.0 L318.4 301.7 L326.0 298.1 L333.6 300.6 L341.9 305.1 L348.8 304.0 L356.4 306.4 L360.2 309.3 L364.2 312.0 L362.4 315.2 L357.9 314.9 L355.6 318.3 L351.8 319.4 L348.8 322.2 L343.8 322.5 L343.4 325.2 L342.7 328.0 L341.2 331.9 L338.7 334.5 L338.1 332.5 L338.1 326.6 L341.2 320.7 L343.4 319.1 L337.4 323.3 L334.3 323.0 L328.3 323.3 L326.0 325.9 L323.7 330.6 L327.1 331.9 L326.4 337.3 L323.7 341.2 L319.9 343.1 L318.2 345.3 L317.9 350.2 L317.6 351.0 L315.7 351.6 L315.6 349.3 L314.6 348.6 L314.4 346.5 L311.9 347.3 L312.3 345.5 L310.4 346.5 L309.1 347.3 L310.0 349.1 L312.8 348.9 L311.0 350.2 L310.2 351.1 L312.2 354.8 L312.2 355.8 L310.5 359.1 L309.3 360.3 L306.2 362.2 L303.6 363.1 L303.2 363.8 L302.0 362.7 L300.7 363.5 L300.0 365.1 L302.4 367.8 L302.6 370.4 L300.5 372.3 L299.2 373.0 L299.4 371.9 L297.9 371.1 L296.3 369.8 L295.6 371.9 L295.1 372.5 L296.4 374.4 L298.3 376.5 L298.6 378.6 L296.6 377.4 L295.8 375.4 L294.3 373.5 L294.5 371.5 L293.8 366.8 L292.6 366.6 L291.3 367.2 L291.0 364.8 L289.5 362.8 L288.0 362.4 L286.5 362.7 L285.6 363.6 L284.2 364.6 L281.9 366.8 L280.6 369.6 L280.2 371.7 L278.5 373.4 L277.6 372.0 L276.6 369.7 L275.7 367.6 L274.9 364.8 L274.8 362.8 L272.8 363.2 L271.9 362.0 L270.5 360.1 L266.7 359.8 L263.3 359.3 L262.4 358.2 L259.5 357.8 L258.0 356.1 L256.1 355.8 L257.6 358.7 L258.8 359.5 L260.6 360.6 L262.2 359.9 L262.4 358.8 L262.9 360.9 L265.1 362.0 L263.7 364.4 L263.3 365.0 L260.6 366.4 L256.1 368.8 L253.8 369.7 L252.5 369.9 L251.9 367.2 L249.3 362.8 L247.4 359.1 L246.2 356.1 L244.3 355.6 L245.1 358.2 L246.6 361.2 L247.9 364.4 L249.6 367.6 L252.4 370.7 L253.8 371.6 L258.6 370.5 L258.7 371.6 L256.9 375.0 L254.0 378.0 L251.9 379.9 L249.8 382.6 L249.5 384.7 L250.4 387.6 L250.5 391.1 L247.7 393.1 L246.1 394.9 L246.6 397.1 L244.6 399.9 L243.2 403.4 L240.5 406.6 L239.1 407.0 L234.8 407.8 L233.6 407.0 L232.9 404.3 L232.2 402.2 L230.6 397.1 L228.6 392.8 L229.7 388.7 L229.7 386.3 L229.0 384.1 L226.5 380.3 L227.1 377.3 L226.8 376.5 L224.2 376.3 L222.2 374.7 L219.6 375.3 L213.9 376.2 L211.3 374.4 L209.6 373.1 L207.9 370.8 L206.3 368.3 L207.1 364.4 L206.7 363.4 L208.2 360.8 L209.8 357.7 L212.0 356.1 L212.3 354.8 L213.9 352.4 L215.2 350.4 L218.9 350.7 L221.9 349.5 L227.4 349.3 L228.0 350.7 L227.2 352.2 L229.7 353.1 L234.1 355.4 L234.8 353.8 L237.1 353.3 L242.4 354.6 L244.2 354.5 L245.8 354.3 L246.6 352.2 L247.0 349.5 L244.7 350.1 L242.8 349.7 L240.5 349.3 L239.8 346.8 L239.5 345.8 L237.1 345.9 L237.6 348.3 L236.3 349.7 L235.6 347.8 L234.4 345.9 L234.4 344.3 L231.4 342.3 L230.0 340.5 L229.0 340.8 L229.1 342.3 L230.6 344.3 L231.8 344.4 L233.7 346.2 L232.5 347.3 L231.8 348.3 L231.6 346.3 L230.5 345.5 L228.7 344.5 L226.5 341.8 L225.1 342.6 L223.4 343.0 L221.9 343.3 L221.3 344.9 L219.4 346.8 L219.8 347.6 L218.0 349.5 L215.4 350.2 L214.8 349.7 L213.9 349.2Z M326.0 344.8 L327.0 340.9 L330.0 342.3 L328.6 344.3 L326.4 343.7Z M319.1 380.7 L321.8 380.2 L324.1 380.7 L326.7 381.5 L330.2 383.0 L331.9 384.3 L331.7 385.6 L334.0 387.6 L330.9 386.4 L328.6 386.4 L326.7 386.6 L324.5 385.8 L324.3 383.4 L320.7 382.6 L319.9 381.7Z M305.6 400.0 L306.2 396.7 L312.3 393.5 L315.0 390.7 L317.6 391.1 L318.8 389.0 L323.5 388.7 L322.9 391.3 L326.0 393.1 L327.2 389.3 L327.9 387.7 L328.8 390.3 L330.5 393.9 L333.2 397.1 L336.0 399.2 L336.3 402.2 L335.9 404.8 L334.0 408.9 L333.5 410.3 L330.8 411.9 L329.0 411.1 L326.4 410.8 L324.1 408.4 L322.7 408.0 L321.4 406.0 L319.1 404.8 L315.3 405.5 L313.4 407.0 L310.4 407.3 L307.0 407.3 L307.4 406.4 L307.0 403.5Z M329.5 413.5 L332.3 413.7 L332.1 416.0 L330.8 416.4 L329.8 414.8Z M322.9 294.1 L326.7 289.8 L333.6 291.3 L327.5 294.7Z M355.2 301.7 L356.7 300.3 L358.5 301.7Z M344.2 395.2 L345.0 395.5 L346.5 396.9 L346.1 397.0Z M338.1 384.5 L340.4 385.8 L341.9 387.0 L342.7 387.7 L341.2 386.8 L338.9 385.1Z M415.2 298.1 L416.4 295.0 L419.4 295.2 L419.8 299.4 L417.9 301.0Z M417.5 306.8 L419.4 304.2 L420.9 306.2 L419.4 307.7Z M401.9 287.3 L404.2 284.0 L406.1 286.3 L403.5 288.9Z M408.0 281.5 L413.3 280.0 L411.1 284.3Z M365.4 312.9 L368.5 311.2 L366.6 307.7 L369.3 305.1 L374.0 301.0 L378.4 302.9 L383.0 304.0 L386.0 304.9 L389.8 306.2 L394.3 304.0 L395.9 302.9 L399.3 305.6 L404.2 306.6 L407.3 308.3 L411.1 307.9 L414.1 307.9 L418.7 308.7 L420.2 307.2 L421.3 300.6 L424.7 305.1 L428.5 304.7 L430.4 311.2 L427.8 314.9 L424.2 316.9 L421.5 323.7 L422.8 326.6 L426.2 327.3 L430.4 329.3 L432.3 333.8 L433.1 333.1 L433.5 328.9 L434.6 322.2 L433.8 318.6 L438.4 319.4 L440.3 323.0 L441.8 324.6 L443.7 322.5 L444.3 321.8 L445.6 326.6 L447.5 329.3 L449.4 332.4 L448.7 334.0 L447.5 335.3 L442.6 335.6 L444.3 337.0 L443.7 339.0 L446.8 340.7 L444.5 341.6 L443.0 342.5 L439.9 342.6 L439.5 344.3 L439.9 344.7 L436.9 345.9 L435.4 349.0 L435.7 351.0 L433.8 352.2 L431.6 354.3 L431.9 357.0 L432.3 358.4 L431.9 359.8 L431.0 358.9 L430.3 357.6 L429.5 355.7 L427.8 355.4 L425.5 355.4 L425.3 356.5 L424.0 356.3 L421.7 356.0 L419.2 357.8 L418.9 360.8 L419.0 362.8 L420.2 364.8 L421.3 365.5 L423.6 365.2 L424.4 363.2 L427.0 362.8 L426.6 364.4 L426.0 367.2 L429.3 367.3 L429.8 368.4 L429.6 371.1 L430.8 372.7 L432.7 372.3 L434.2 373.0 L435.7 371.5 L438.4 370.1 L438.9 371.3 L441.4 371.5 L444.5 371.5 L446.4 371.9 L449.0 374.4 L451.3 375.0 L453.6 375.7 L455.1 378.0 L455.5 379.6 L459.7 381.3 L462.7 381.8 L465.0 383.2 L466.4 383.7 L466.7 385.3 L466.1 386.8 L463.9 389.5 L463.5 393.1 L462.7 395.5 L461.2 397.5 L458.9 398.2 L456.6 400.0 L456.2 402.2 L454.4 404.3 L452.6 406.9 L451.3 408.0 L449.8 407.5 L448.7 407.6 L449.8 409.4 L449.3 411.0 L446.0 411.8 L445.8 413.6 L443.7 413.8 L444.8 415.6 L443.7 417.9 L441.8 419.3 L443.1 421.0 L441.4 423.9 L441.2 426.3 L443.0 429.4 L442.0 431.0 L439.9 429.8 L438.4 428.5 L436.5 426.3 L435.7 421.8 L436.7 417.9 L436.9 414.8 L437.3 410.3 L438.7 406.1 L438.9 402.2 L439.5 397.5 L439.7 393.7 L438.0 392.7 L435.7 391.1 L434.5 388.7 L432.7 385.0 L431.3 383.1 L432.3 381.7 L431.9 379.9 L432.7 378.8 L433.5 377.8 L434.3 376.5 L434.4 374.2 L433.5 373.3 L432.5 374.0 L431.6 373.5 L429.7 373.1 L427.9 371.5 L426.6 369.6 L423.6 368.9 L421.3 367.2 L418.7 367.1 L416.4 366.2 L413.0 363.6 L413.0 361.6 L410.7 359.7 L408.0 356.5 L405.9 354.1 L406.5 355.6 L407.9 358.7 L409.5 361.6 L408.0 360.1 L406.1 357.6 L405.0 355.2 L404.1 353.3 L403.1 352.1 L401.5 351.5 L400.0 348.8 L398.7 345.9 L398.9 339.8 L398.4 337.4 L399.4 337.3 L398.1 335.3 L395.9 333.8 L394.1 330.0 L392.1 326.6 L389.4 324.8 L387.1 322.5 L384.1 322.2 L381.4 321.0 L378.0 323.0 L376.5 325.2 L374.2 326.9 L372.7 328.2 L369.7 329.3 L368.1 330.0 L371.6 327.3 L373.8 324.2 L370.2 324.3 L368.1 321.8 L367.6 318.8 L369.3 316.1 L370.8 315.1 L369.3 314.9 L366.6 314.7Z M437.6 279.6 L442.6 287.6 L448.7 288.9 L450.6 295.5 L451.3 301.7 L452.8 305.1 L452.5 311.2 L454.0 315.8 L456.3 320.7 L459.7 322.5 L460.8 321.0 L462.0 317.5 L462.9 314.0 L464.6 312.9 L468.0 308.3 L473.0 306.6 L476.0 303.3 L474.9 298.1 L476.8 294.1 L478.7 286.7 L479.4 279.6Z M474.9 313.1 L476.4 311.4 L480.6 311.2 L482.8 313.6 L481.7 315.2 L479.4 316.8 L476.0 316.1Z M425.1 296.3 L428.5 295.2 L434.6 297.3 L439.2 301.3 L442.2 305.1 L446.0 310.6 L446.2 312.2 L444.1 317.5 L443.0 319.3 L439.2 317.8 L436.5 314.9 L434.1 314.5 L437.6 309.7 L436.5 307.7 L431.2 305.1 L428.1 304.0 L425.9 301.7Z M403.1 301.0 L404.1 297.9 L408.0 297.1 L412.6 296.3 L413.7 300.6 L415.6 304.5 L412.6 306.0 L408.0 305.6 L404.2 304.5Z M397.9 299.4 L398.5 293.6 L401.9 293.0 L404.6 295.5 L403.5 298.6 L400.8 300.8Z M421.3 291.9 L422.8 287.3 L427.8 286.3 L431.9 287.6 L431.7 292.5 L426.2 292.7Z M424.7 284.3 L430.0 287.3 L433.8 285.0 L437.3 280.4 L439.9 275.7 L430.8 271.3 L423.2 277.7Z M404.2 289.5 L405.7 286.3 L412.6 287.6 L413.0 291.3 L409.5 291.9 L405.0 291.6Z M416.4 290.7 L418.3 286.3 L419.4 288.0 L418.7 291.3Z M420.7 298.1 L421.3 294.4 L424.4 295.0 L423.6 297.9Z M426.6 315.8 L428.5 312.7 L431.9 315.8 L428.5 317.6Z M448.1 338.2 L450.2 334.1 L452.5 337.2 L452.4 339.2 L450.6 338.3Z M428.5 362.5 L430.8 361.5 L434.6 362.4 L436.7 363.9 L434.2 364.1 L431.9 362.6 L429.3 362.6Z M436.6 364.2 L441.1 365.2 L439.2 365.9 L436.6 365.4Z M486.3 349.3 L485.9 347.5 L486.3 344.3 L486.0 343.3 L487.0 342.6 L491.7 342.9 L492.2 340.1 L489.5 337.4 L492.0 337.1 L491.7 335.9 L493.2 336.2 L494.5 334.4 L495.8 333.8 L496.7 332.0 L498.4 331.3 L499.6 330.8 L499.2 328.6 L501.1 325.6 L501.1 327.7 L501.4 330.1 L502.6 330.1 L503.9 330.8 L507.3 330.1 L509.0 328.9 L509.0 326.9 L511.3 326.6 L510.9 324.5 L511.3 323.3 L515.9 322.4 L512.1 321.8 L509.4 320.7 L509.4 316.6 L512.5 314.0 L509.8 312.5 L506.4 318.3 L507.4 322.2 L507.1 323.3 L505.6 326.6 L504.1 327.8 L502.9 328.5 L502.1 325.6 L501.1 323.1 L498.4 325.2 L496.9 321.5 L497.3 318.3 L500.3 316.1 L503.0 311.2 L504.1 307.2 L507.5 304.5 L512.7 301.5 L516.3 304.0 L518.2 305.6 L524.2 309.3 L522.0 311.8 L519.3 313.1 L520.8 314.9 L523.9 314.9 L526.5 307.2 L533.7 307.7 L537.2 306.6 L538.7 305.1 L544.0 306.2 L545.1 300.6 L545.9 295.5 L548.2 298.1 L548.5 309.3 L550.1 307.2 L551.6 298.1 L554.2 298.1 L553.9 295.2 L559.2 294.1 L559.9 289.8 L567.5 287.6 L572.1 282.6 L578.2 288.3 L576.7 294.1 L582.7 295.5 L588.8 296.0 L591.8 301.7 L599.4 298.1 L607.0 300.6 L615.4 305.1 L622.2 304.0 L629.8 306.4 L633.6 309.3 L637.7 312.0 L635.9 315.2 L631.3 314.9 L629.1 318.3 L625.3 319.4 L622.2 322.2 L617.3 322.5 L616.9 325.2 L616.2 328.0 L614.6 331.9 L612.1 334.5 L611.6 332.5 L611.6 326.6 L614.6 320.7 L616.9 319.1 L610.8 323.3 L607.8 323.0 L601.7 323.3 L599.4 325.9 L597.2 330.6 L600.6 331.9 L599.8 337.3 L597.2 341.2 L593.4 343.1 L591.7 345.3 L591.4 350.2 L591.1 351.0 L589.2 351.6 L589.0 349.3 L588.1 348.6 L587.8 346.5 L585.4 347.3 L585.8 345.5 L583.9 346.5 L582.6 347.3 L583.5 349.1 L586.3 348.9 L584.5 350.2 L583.6 351.1 L585.7 354.8 L585.7 355.8 L583.9 359.1 L582.7 360.3 L579.7 362.2 L577.0 363.1 L576.7 363.8 L575.5 362.7 L574.1 363.5 L573.5 365.1 L575.8 367.8 L576.0 370.4 L574.0 372.3 L572.7 373.0 L572.9 371.9 L571.3 371.1 L569.7 369.8 L569.1 371.9 L568.5 372.5 L569.8 374.4 L571.7 376.5 L572.1 378.6 L570.0 377.4 L569.3 375.4 L567.8 373.5 L567.9 371.5 L567.3 366.8 L566.0 366.6 L564.7 367.2 L564.5 364.8 L563.0 362.8 L561.5 362.4 L559.9 362.7 L559.0 363.6 L557.7 364.6 L555.4 366.8 L554.1 369.6 L553.7 371.7 L552.0 373.4 L551.1 372.0 L550.1 369.7 L549.2 367.6 L548.4 364.8 L548.2 362.8 L546.3 363.2 L545.4 362.0 L544.0 360.1 L540.2 359.8 L536.8 359.3 L535.9 358.2 L533.0 357.8 L531.5 356.1 L529.6 355.8 L531.1 358.7 L532.2 359.5 L534.1 360.6 L535.6 359.9 L535.9 358.8 L536.4 360.9 L538.5 362.0 L537.2 364.4 L536.8 365.0 L534.1 366.4 L529.6 368.8 L527.3 369.7 L526.0 369.9 L525.4 367.2 L522.7 362.8 L520.8 359.1 L519.7 356.1 L517.8 355.6 L518.5 358.2 L520.1 361.2 L521.4 364.4 L523.1 367.6 L525.9 370.7 L527.3 371.6 L532.1 370.5 L532.1 371.6 L530.3 375.0 L527.5 378.0 L525.4 379.9 L523.3 382.6 L523.0 384.7 L523.9 387.6 L524.0 391.1 L521.2 393.1 L519.5 394.9 L520.1 397.1 L518.1 399.9 L516.6 403.4 L514.0 406.6 L512.5 407.0 L508.3 407.8 L507.1 407.0 L506.4 404.3 L505.6 402.2 L504.1 397.1 L502.1 392.8 L503.1 388.7 L503.1 386.3 L502.4 384.1 L499.9 380.3 L500.5 377.3 L500.3 376.5 L497.7 376.3 L495.7 374.7 L493.1 375.3 L487.4 376.2 L484.7 374.4 L483.1 373.1 L481.3 370.8 L479.8 368.3 L480.6 364.4 L480.2 363.4 L481.7 360.8 L483.2 357.7 L485.5 356.1 L485.7 354.8 L487.3 352.4 L488.7 350.4 L492.3 350.7 L495.4 349.5 L500.8 349.3 L501.5 350.7 L500.7 352.2 L503.1 353.1 L507.5 355.4 L508.3 353.8 L510.6 353.3 L515.9 354.6 L517.6 354.5 L519.2 354.3 L520.1 352.2 L520.4 349.5 L518.2 350.1 L516.3 349.7 L514.0 349.3 L513.2 346.8 L513.0 345.8 L510.6 345.9 L511.1 348.3 L509.8 349.7 L509.0 347.8 L507.9 345.9 L507.9 344.3 L504.9 342.3 L503.5 340.5 L502.4 340.8 L502.6 342.3 L504.1 344.3 L505.3 344.4 L507.1 346.2 L506.0 347.3 L505.3 348.3 L505.0 346.3 L504.0 345.5 L502.2 344.5 L499.9 341.8 L498.6 342.6 L496.9 343.0 L495.4 343.3 L494.8 344.9 L492.9 346.8 L493.2 347.6 L491.4 349.5 L488.8 350.2 L488.3 349.7 L487.4 349.2Z M488.8 335.4 L494.2 334.1 L494.4 332.3 L493.1 331.3 L492.0 329.3 L491.6 328.0 L491.7 325.8 L490.4 324.3 L489.3 324.3 L488.4 326.6 L488.9 328.6 L489.5 329.6 L490.8 330.8 L489.5 331.6 L490.1 332.5 L489.1 333.4 L490.8 333.8Z M485.5 333.6 L488.4 332.9 L488.5 330.6 L488.8 329.2 L486.6 329.1 L485.5 331.3Z M591.8 354.3 L592.6 352.1 L595.6 352.2 L598.7 351.1 L600.1 350.4 L600.6 347.3 L600.4 344.9 L599.4 345.6 L599.3 347.8 L597.2 349.3 L596.0 350.6 L593.4 350.9 L592.0 352.5Z M599.4 344.8 L600.4 340.9 L603.5 342.3 L602.1 344.3 L599.8 343.7Z M601.0 340.1 L602.1 339.6 L601.7 336.2 L602.0 331.3 L601.1 330.2 L601.0 334.4Z M584.4 362.0 L585.7 359.9 L585.0 359.8 L584.3 361.2Z M575.6 364.8 L576.7 364.0 L577.4 364.4 L576.3 365.5Z M553.7 372.1 L555.2 373.8 L554.2 375.1 L553.7 374.2Z M530.5 388.7 L531.5 391.5 L528.8 399.2 L527.3 399.6 L526.1 396.7 L526.9 391.9 L529.2 390.3Z M565.5 375.3 L567.2 375.6 L569.4 378.0 L572.1 380.3 L573.6 381.8 L573.6 384.0 L572.5 384.0 L569.8 381.5 L567.9 378.4Z M573.0 384.7 L575.5 384.3 L578.2 384.7 L580.1 385.5 L580.1 386.1 L576.7 385.8 L573.6 385.3Z M575.9 378.2 L577.0 378.7 L578.9 377.1 L581.2 374.4 L583.6 375.6 L582.7 378.8 L581.6 380.7 L581.2 382.4 L580.1 382.2 L576.9 381.8 L576.3 380.3Z M583.9 383.7 L584.5 380.3 L584.7 378.8 L587.9 378.4 L585.4 378.9 L586.7 380.2 L585.2 380.9 L586.8 382.7 L585.0 382.6 L584.6 383.8Z M592.6 380.7 L595.3 380.2 L597.5 380.7 L600.2 381.5 L603.6 383.0 L605.4 384.3 L605.1 385.6 L607.4 387.6 L604.4 386.4 L602.1 386.4 L600.2 386.6 L597.9 385.8 L597.8 383.4 L594.1 382.6 L593.4 381.7Z M584.3 365.2 L586.0 365.3 L585.9 367.2 L587.4 369.6 L588.4 370.5 L589.2 373.8 L588.4 375.0 L585.8 374.2 L586.9 372.1 L585.6 370.0 L584.7 368.6 L584.1 367.0Z M579.1 400.0 L579.7 396.7 L585.8 393.5 L588.4 390.7 L591.1 391.1 L592.2 389.0 L597.0 388.7 L596.4 391.3 L599.4 393.1 L600.7 389.3 L601.3 387.7 L602.3 390.3 L604.0 393.9 L606.7 397.1 L609.5 399.2 L609.8 402.2 L609.3 404.8 L607.4 408.9 L607.0 410.3 L604.3 411.9 L602.5 411.1 L599.8 410.8 L597.5 408.4 L596.2 408.0 L594.9 406.0 L592.6 404.8 L588.8 405.5 L586.9 407.0 L583.9 407.3 L580.5 407.3 L580.9 406.4 L580.5 403.5Z M602.9 413.5 L605.7 413.7 L605.5 416.0 L604.2 416.4 L603.2 414.8Z M532.6 300.6 L534.9 296.8 L536.4 291.3 L544.8 285.7 L538.7 289.5 L534.9 295.5 L536.0 302.7Z M501.5 279.6 L505.3 274.4 L513.6 274.4 L508.3 284.3 L504.5 285.0Z M596.4 294.1 L600.2 289.8 L607.0 291.3 L601.0 294.7Z M617.7 395.2 L618.4 395.5 L620.0 396.9 L619.6 397.0Z M611.6 384.5 L613.9 385.8 L615.4 387.0 L616.2 387.7 L614.6 386.8 L612.4 385.1Z M502.5 348.3 L504.9 348.0 L504.6 349.5Z M499.4 345.3 L500.5 345.2 L500.4 347.3 L499.5 347.3Z M499.6 344.3 L500.3 343.3 L500.3 344.9Z M510.9 350.6 L513.1 350.9 L511.7 351.2Z M517.6 351.1 L519.4 350.5 L518.8 351.5Z M371.6 362.4 L375.0 364.0 L374.6 364.8Z M433.8 365.2 L435.2 365.6 L434.6 365.8Z M442.0 365.2 L443.3 365.4 L443.0 365.6Z" fill="#f2f1ec" stroke="#f2f1ec" stroke-width="0.4" stroke-linejoin="round"/><path d="M514.2 345.0 L514.6 342.9 L515.9 341.2 L518.2 341.8 L520.1 341.3 L522.0 341.6 L523.5 343.1 L524.7 344.8 L520.4 345.0 L516.6 345.2Z M528.8 341.4 L531.1 339.6 L533.4 340.7 L531.8 343.3 L533.4 344.8 L534.1 348.8 L531.1 349.3 L530.3 347.8 L530.7 345.9Z M423.2 339.3 L425.5 337.5 L427.8 337.0 L428.8 339.4 L426.6 339.4Z M426.4 344.6 L426.2 341.7 L428.5 340.1 L427.9 343.3 L427.3 344.6Z M428.9 340.3 L431.2 339.9 L432.3 341.2 L431.0 343.2 L430.0 342.3Z M429.7 344.6 L431.6 343.8 L433.1 343.4 L431.9 344.3 L430.4 344.9Z M432.5 343.0 L435.1 342.0 L435.1 342.9Z" fill="#a6c5f0"/></g></svg>
<div class="t" style="left:404.90px;top:329.51px;font-size:6.395px;line-height:7.144px;color:#262626;transform:scaleX(0.848);transform-origin:0 0;">NORTH AMERICA</div><div class="t" style="left:507.00px;top:331.91px;font-size:6.395px;line-height:7.144px;color:#262626;transform:scaleX(0.762);transform-origin:0 0;">EUROPE</div><div class="t" style="left:570.80px;top:327.01px;font-size:6.395px;line-height:7.144px;color:#262626;transform:scaleX(0.837);transform-origin:0 0;">ASIA</div><div class="t" style="left:508.00px;top:373.51px;font-size:6.395px;line-height:7.144px;color:#262626;transform:scaleX(0.810);transform-origin:0 0;">AFRICA</div><div class="t" style="left:443.10px;top:390.81px;font-size:6.395px;line-height:7.144px;color:#262626;transform:scaleX(0.846);transform-origin:0 0;">SOUTH AMERICA</div><div style="position:absolute;left:340px;top:380px;width:276.5px;height:30px;overflow:hidden"><div style="position:absolute;left:-340px;top:-380px"><div class="t" style="left:593.20px;top:395.91px;font-size:6.395px;line-height:7.144px;color:#262626;transform:scaleX(0.786);transform-origin:0 0;">AUSTRAL</div><div class="t" style="left:616.60px;top:395.91px;font-size:6.395px;line-height:7.144px;color:#262626;transform:scaleX(0.850);transform-origin:0 0;">IA</div></div></div><div class="t" style="left:361.75px;top:350.43px;font-size:6.600px;line-height:7.372px;color:#3d55a8;transform:scaleX(0.900);transform-origin:0 0;font-style:italic;-webkit-text-stroke:0px #3d55a8;">Pacific</div><div class="t" style="left:361.75px;top:357.13px;font-size:6.600px;line-height:7.372px;color:#3d55a8;transform:scaleX(0.900);transform-origin:0 0;font-style:italic;-webkit-text-stroke:0px #3d55a8;">Ocean</div><div class="t" style="left:457.61px;top:352.33px;font-size:6.600px;line-height:7.372px;color:#3d55a8;transform:scaleX(0.900);transform-origin:0 0;font-style:italic;-webkit-text-stroke:0px #3d55a8;">Atlantic</div><div class="t" style="left:458.45px;top:359.03px;font-size:6.600px;line-height:7.372px;color:#3d55a8;transform:scaleX(0.900);transform-origin:0 0;font-style:italic;-webkit-text-stroke:0px #3d55a8;">Ocean</div><div class="t" style="left:549.81px;top:394.33px;font-size:6.600px;line-height:7.372px;color:#3d55a8;transform:scaleX(0.900);transform-origin:0 0;font-style:italic;-webkit-text-stroke:0px #3d55a8;">Indian</div><div class="t" style="left:549.15px;top:401.03px;font-size:6.600px;line-height:7.372px;color:#3d55a8;transform:scaleX(0.900);transform-origin:0 0;font-style:italic;-webkit-text-stroke:0px #3d55a8;">Ocean</div><div class="t" style="left:492.20px;top:424.70px;font-size:5.523px;line-height:6.169px;color:#222;transform:scaleX(0.879);transform-origin:0 0;">© 2019 HERE, © 2019 Microsoft Corporation</div><div class="t" style="left:592.50px;top:424.70px;font-size:5.523px;line-height:6.169px;color:#3c55b8;transform:scaleX(0.832);transform-origin:0 0;text-decoration:underline">Terms</div><svg style="position:absolute;left:0;top:0" width="750" height="464"><path d="M341.1 419.2 V427.3 L346.2 424.4 L343.6 423" fill="none" stroke="#111" stroke-width="1.5" stroke-linejoin="round"/></svg><div class="t" style="left:349.00px;top:420.60px;font-size:7.849px;line-height:8.767px;color:#333;transform:scaleX(0.892);transform-origin:0 0;-webkit-text-stroke:0.15px #333;">Bing</div>
<div class="t" style="left:631.70px;top:283.82px;font-size:6.831px;line-height:7.631px;color:#333;transform:scaleX(0.934);transform-origin:0 0;-webkit-text-stroke:0.15px #333;">Category</div>
<div style="position:absolute;left:632px;top:294.70px;width:5.4px;height:5.4px;border:0.6px solid #b0b0b0"></div>
<div class="t" style="left:643.30px;top:294.70px;font-size:7.849px;line-height:8.767px;color:#707070;transform:scaleX(0.920);transform-origin:0 0;">Electrical</div>
<div style="position:absolute;left:632px;top:304.96px;width:5.4px;height:5.4px;border:0.6px solid #b0b0b0"></div>
<div class="t" style="left:643.30px;top:304.96px;font-size:7.849px;line-height:8.767px;color:#707070;transform:scaleX(0.920);transform-origin:0 0;">Goods &amp; Services</div>
<div style="position:absolute;left:632px;top:315.22px;width:5.4px;height:5.4px;border:0.6px solid #b0b0b0"></div>
<div class="t" style="left:643.30px;top:315.22px;font-size:7.849px;line-height:8.767px;color:#707070;transform:scaleX(0.920);transform-origin:0 0;">Logistics</div>
<div style="position:absolute;left:632px;top:325.48px;width:5.4px;height:5.4px;border:0.6px solid #b0b0b0"></div>
<div class="t" style="left:643.30px;top:325.48px;font-size:7.849px;line-height:8.767px;color:#707070;transform:scaleX(0.920);transform-origin:0 0;">Materials &amp; Components</div>
<div style="position:absolute;left:632px;top:335.74px;width:5.4px;height:5.4px;border:0.6px solid #b0b0b0"></div>
<div class="t" style="left:643.30px;top:335.74px;font-size:7.849px;line-height:8.767px;color:#707070;transform:scaleX(0.920);transform-origin:0 0;">Mechanicals</div>
<div style="position:absolute;left:632px;top:346.00px;width:5.4px;height:5.4px;border:0.6px solid #b0b0b0"></div>
<div class="t" style="left:643.30px;top:346.00px;font-size:7.849px;line-height:8.767px;color:#707070;transform:scaleX(0.920);transform-origin:0 0;">Packaging</div>
</body></html>
